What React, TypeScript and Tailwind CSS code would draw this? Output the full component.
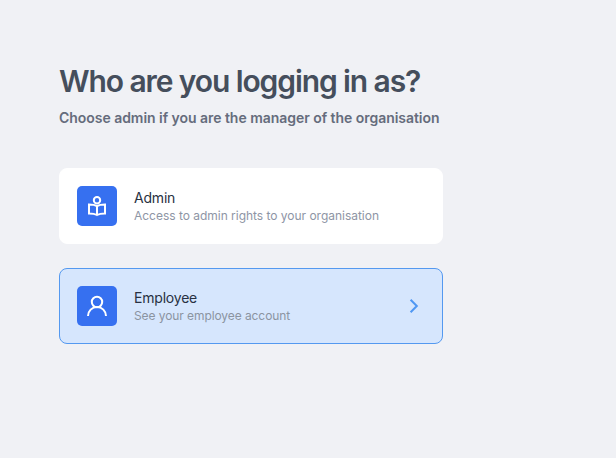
import type { ReactNode } from "react";

function ReaderIcon() {
  return (
    <svg width="24" height="24" viewBox="0 0 24 24" fill="none" stroke="currentColor" strokeWidth="2">
      <circle cx="12" cy="6.2" r="3.2" />
      <path d="M12 12.2C10 11 7 10.6 4 10.6v8.8c3 0 6 .4 8 1.6 2-1.2 5-1.6 8-1.6v-8.8c-3 0-6 .4-8 1.6Z" />
      <path d="M12 11.8V21" />
    </svg>
  );
}

function UserIcon() {
  return (
    <svg width="24" height="24" viewBox="0 0 24 24" fill="none" stroke="currentColor" strokeWidth="2">
      <circle cx="12" cy="8" r="5.2" />
      <path d="M3 22a9 9 0 0 1 18 0" />
    </svg>
  );
}

type RoleCardProps = {
  title: string;
  description: string;
  icon: ReactNode;
  selected?: boolean;
};

function RoleCard({ title, description, icon, selected = false }: RoleCardProps) {
  return (
    <button
      type="button"
      className={
        selected
          ? "flex h-[76px] w-full items-center rounded-lg border border-[#5499f0] bg-[#d6e6fd] px-[17px] text-left"
          : "flex h-[76px] w-full items-center rounded-lg border border-white bg-white px-[17px] text-left"
      }
    >
      <span className="flex size-10 shrink-0 items-center justify-center rounded-[5px] bg-[#3670f0] text-white">
        {icon}
      </span>
      <span className="ml-[17px] flex flex-col whitespace-nowrap">
        <span className="text-[14px] leading-[18px] tracking-[-0.2px] text-[#283142]">{title}</span>
        <span
          className={
            selected
              ? "text-[12px] leading-[17px] tracking-[-0.08px] text-[#8b94a1]"
              : "text-[12px] leading-[17px] tracking-[-0.02px] text-[#8e95a5]"
          }
        >
          {description}
        </span>
      </span>
      {selected && (
        <svg className="ml-auto mr-[6px]" width="10" height="16" viewBox="0 0 10 16" fill="none" stroke="#4f97f3" strokeWidth="2">
          <path d="M1.6 1.8 7.8 8 1.6 14.2" />
        </svg>
      )}
    </button>
  );
}

export default function App() {
  return (
    <main className="h-screen bg-[#f0f1f5] pl-[59px] pt-[61px] font-['Inter',sans-serif]">
      <h1 className="whitespace-nowrap text-[30px] font-semibold leading-[40px] tracking-[-1.1px] text-[#454e5c]">
        Who are you logging in as?
      </h1>
      <p className="mt-[7px] whitespace-nowrap text-[14px] font-semibold leading-5 tracking-[-0.04px] text-[#656c7c]">
        Choose admin if you are the manager of the organisation
      </p>
      <div className="mt-10 flex w-[384px] flex-col gap-6">
        <RoleCard
          title="Admin"
          description="Access to admin rights to your organisation"
          icon={<ReaderIcon />}
        />
        <RoleCard title="Employee" description="See your employee account" icon={<UserIcon />} selected />
      </div>
    </main>
  );
}
